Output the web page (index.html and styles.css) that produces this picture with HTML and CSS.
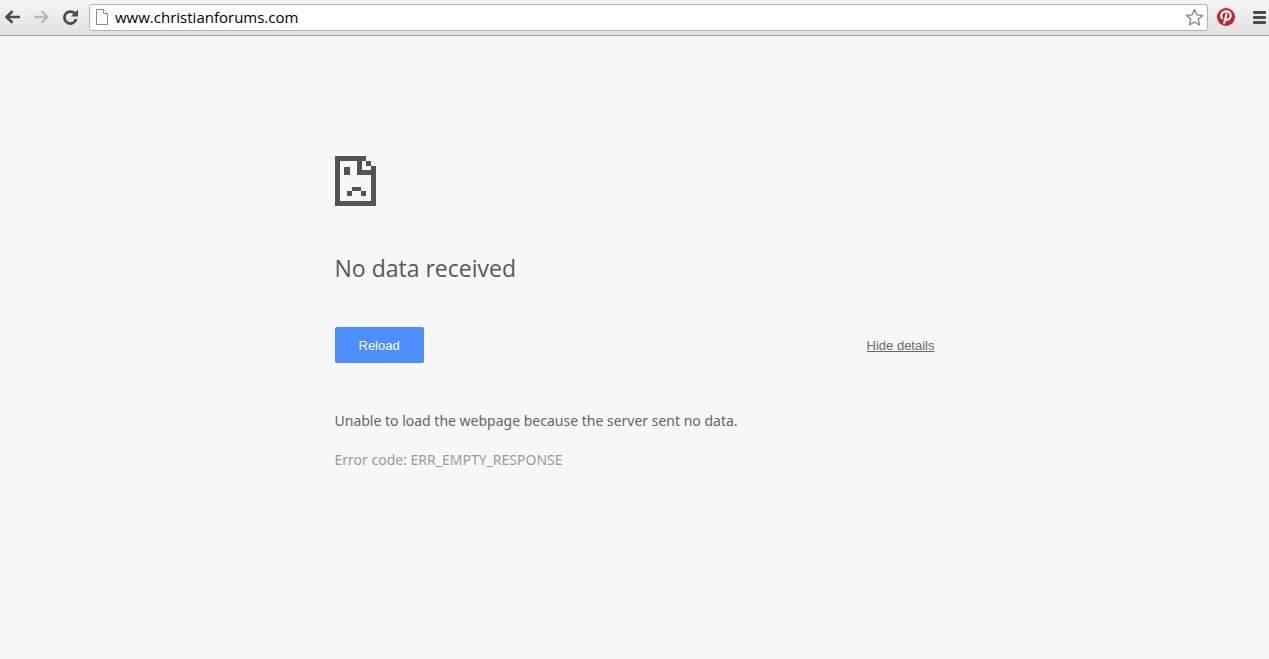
FILE: index.html
```html
<!DOCTYPE html>
<html lang="en">
<head>
<meta charset="utf-8">
<meta name="viewport" content="width=device-width, initial-scale=1">
<title>www.christianforums.com</title>
<link rel="stylesheet" href="styles.css">
</head>
<body>
<header class="toolbar">
  <nav class="nav" aria-label="Navigation">
    <button class="tool" type="button" aria-label="Back">
      <svg width="18" height="18" viewBox="0 0 18 18" fill="none" stroke="#4c4c4c" stroke-width="2.6" stroke-linejoin="round"><path d="M17 9H4M9.500 3.200 3.500 9l6 5.800"/></svg>
    </button>
    <button class="tool" type="button" aria-label="Forward" disabled>
      <svg width="18" height="18" viewBox="0 0 18 18" fill="none" stroke="#b9b9b9" stroke-width="2.400" stroke-linejoin="round"><path d="M2 9h13M9.500 3.200 15.500 9l-6 5.800"/></svg>
    </button>
    <button class="tool" type="button" aria-label="Reload page">
      <svg width="18" height="18" viewBox="0 0 18 18"><path d="M13.800 5.500A6 6 0 1 0 15.200 11" fill="none" stroke="#4c4c4c" stroke-width="2.800"/><path d="M17 1.500v7h-7z" fill="#4c4c4c"/></svg>
    </button>
  </nav>
  <form class="omnibox">
    <svg class="page-icon" width="14" height="16" viewBox="0 0 14 16" fill="#fbfbfb" stroke="#8d8792"><path d="M1.500.5h7l4 4v11h-11z"/><path d="M8.500.5v4h4" fill="#fff"/></svg>
    <input class="address" type="text" aria-label="Address" value="www.christianforums.com">
    <button class="star" type="button" aria-label="Bookmark this page">
      <svg width="20" height="20" viewBox="0 0 20 20" fill="#fff" stroke="#857f8c" stroke-width="1.300" stroke-linejoin="round"><path d="m10.500 2.500 2.400 5.300 5.600.6-4.200 3.800 1.200 5.800-5-3-5 3 1.200-5.800-4.200-3.800 5.600-.6z"/></svg>
    </button>
  </form>
  <button class="tool" type="button" aria-label="Pin it">
    <svg width="18" height="18" viewBox="0 0 18 18"><circle cx="9" cy="9" r="9" fill="#cb2027"/><path d="M5.200 10.500C2.800 7.200 5 3.400 9.300 3.400c5.800 0 5.400 8.200 1.200 8.200-1.100 0-1.800-.5-2.100-1.100M9.500 6.300 7.200 15.300" fill="none" stroke="#fff" stroke-width="2.100" stroke-linecap="round"/></svg>
  </button>
  <button class="tool menu" type="button" aria-label="Menu">
    <svg width="13" height="13" viewBox="0 0 13 13" fill="#4c4c4c"><rect width="13" height="3" rx="1"/><rect y="5" width="13" height="3" rx="1"/><rect y="10" width="13" height="3" rx="1"/></svg>
  </button>
</header>
<main class="error">
  <svg class="sad-page" width="41" height="50" viewBox="0 0 41 50" fill="#535353" shape-rendering="crispEdges" aria-hidden="true"><path d="M0 0h31v5h-4v9h9v-4h5v40H0zM5 5v40h31V19H22V5z" fill-rule="evenodd"/><path d="M27 5h4v5h5v4h-9z" fill="#f7f7f7"/><path d="M31 5h5v5h-5zM9 11h6v8H9zM17 31h9v4h-9zM12 35h5v5h-5zM26 35h5v5h-5z"/></svg>
  <h1 class="title">No data received</h1>
  <div class="actions">
    <button class="reload" type="button">Reload</button>
    <a class="details-link" href="#details">Hide details</a>
  </div>
  <section class="details" id="details">
    <p class="reason">Unable to load the webpage because the server sent no data.</p>
    <p class="code">Error code: ERR_EMPTY_RESPONSE</p>
  </section>
</main>
</body>
</html>
```
FILE: styles.css
```css
* {
  box-sizing: border-box;
}

body {
  margin: 0;
  background: #f7f7f7;
  color: #585858;
  font-family: "Open Sans", "Noto Sans", sans-serif;
}

button {
  border: 0;
  padding: 0;
  background: none;
  cursor: pointer;
}

svg {
  display: block;
}

.toolbar {
  display: flex;
  align-items: center;
  height: 36px;
  padding: 0 3px 1px;
  border-bottom: 1px solid #a9a9a9;
  background: linear-gradient(#f5f5f5, #e2e2e2);
}

.nav {
  display: flex;
  gap: 11px;
  margin-right: 10px;
}

.omnibox {
  display: flex;
  flex: 1;
  align-items: center;
  height: 27px;
  margin-right: 9px;
  padding: 0 3px 0 5px;
  border: 1px solid #b3b3b3;
  border-radius: 3px;
  background: #fff;
}

.address {
  flex: 1;
  min-width: 0;
  margin-left: 6px;
  padding: 0;
  border: 0;
  outline: 0;
  background: none;
  color: #000;
  font: 15px/20px "Open Sans", "Noto Sans", sans-serif;
}

.menu {
  margin-left: 18px;
}

.error {
  max-width: 600px;
  margin: 0 auto;
  padding-top: 120px;
}

.title {
  margin: 46px 0 42px;
  font-size: 23px;
  font-weight: 400;
  line-height: 33px;
}

.actions {
  display: flex;
  align-items: center;
  justify-content: space-between;
}

.reload {
  height: 36px;
  padding: 2px 24px 0;
  border-radius: 2px;
  background: #4c8efb;
  color: #fff;
  font: 13px/16px "Liberation Sans", Arial, sans-serif;
}

.details-link {
  padding-top: 2px;
  color: #696969;
  font: 13px/16px "Liberation Sans", Arial, sans-serif;
}

.details {
  padding-top: 48px;
  font-family: "Noto Sans", "Open Sans", sans-serif;
  font-size: 14px;
  line-height: 20px;
}

.reason {
  margin: 0 0 19px;
  color: #646464;
}

.code {
  margin: 0;
  color: #9b9b9b;
}
```
